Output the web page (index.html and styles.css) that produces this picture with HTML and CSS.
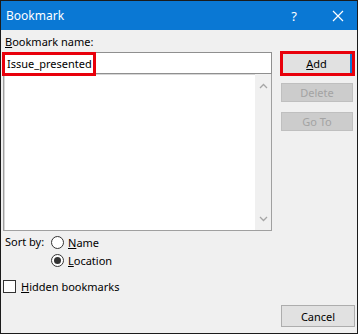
FILE: index.html
```html
<!DOCTYPE html>
<html lang="en">
<head>
  <meta charset="UTF-8" />
  <title>Bookmark</title>
  <link rel="stylesheet" href="styles.css">
</head>
<body>

<div class="window">
  <div class="titlebar">
    <span class="title">Bookmark</span>
    <span class="help">?</span>
    <svg class="close" width="12" height="12" viewBox="0 0 12 12">
      <path d="M1 1 L11 11 M11 1 L1 11" stroke="#fff" stroke-width="1.2" fill="none"/>
    </svg>
  </div>

  <div class="content">
    <div class="left">
      <div class="label"><u>B</u>ookmark name:</div>
      <div class="name-input">
        <span class="typed">Issue_presented</span><span class="caret"></span>
        <div class="mark mark-name"></div>
      </div>
      <div class="listbox">
        <div class="list-items"></div>
        <div class="scrollbar">
          <svg width="9" height="6" viewBox="0 0 9 6"><path d="M1 5 L4.5 1.5 L8 5" stroke="#a6a6a6" stroke-width="1.3" fill="none"/></svg>
          <svg width="9" height="6" viewBox="0 0 9 6"><path d="M1 1 L4.5 4.5 L8 1" stroke="#a6a6a6" stroke-width="1.3" fill="none"/></svg>
        </div>
      </div>

      <div class="sort">
        <span class="sort-label">Sort by:</span>
        <div class="radios">
          <div class="radio-row"><span class="radio"></span><u>N</u>ame</div>
          <div class="radio-row"><span class="radio checked"></span><u>L</u>ocation</div>
        </div>
      </div>

      <div class="check-row"><span class="checkbox"></span><u>H</u>idden bookmarks</div>
    </div>

    <div class="right">
      <div class="mark-add">
        <button class="btn btn-default"><u>A</u>dd</button>
      </div>
      <button class="btn btn-disabled btn-delete">Delete</button>
      <button class="btn btn-disabled btn-goto">Go To</button>
      <button class="btn btn-cancel">Cancel</button>
    </div>
  </div>
</div>

</body>
</html>
```

FILE: styles.css
```css
body {
  margin: 0;
  font-family: "Noto Sans", "Open Sans", sans-serif;
  font-size: 11px;
  color: #000;
  background: #fff;
}

u {
  text-decoration: underline;
  text-underline-offset: 1px;
}

.window {
  width: 358px;
  height: 334px;
  box-sizing: border-box;
  border: 1px solid #1b1b1b;
  background: #f0f0f0;
  display: flex;
  flex-direction: column;
}

.titlebar {
  height: 29px;
  background: #0a78d4;
  color: #fff;
  display: flex;
  align-items: center;
  padding: 0 0 0 5px;
  flex-shrink: 0;
}

.title {
  flex: 1;
  font-size: 12px;
}

.help {
  font-size: 13px;
  margin-right: 35px;
}

.close {
  margin-right: 13px;
}

.content {
  flex: 1;
  display: grid;
  grid-template-columns: 269px 75px;
  column-gap: 8px;
  padding: 0 2px;
}

.left {
  display: flex;
  flex-direction: column;
}

.label {
  padding: 5px 0 0 2px;
  height: 17px;
  line-height: 14px;
}

.name-input {
  position: relative;
  height: 22px;
  box-sizing: border-box;
  border: 1px solid #8f8f8f;
  background: #fff;
  display: flex;
  align-items: center;
  padding-left: 3px;
}

.caret {
  display: inline-block;
  width: 1px;
  height: 14px;
  background: #000;
  margin-left: 1px;
}

.mark {
  position: absolute;
  border: 3px solid #e8000b;
  box-sizing: border-box;
}

.mark-name {
  left: -2px;
  top: -1px;
  width: 94px;
  height: 24px;
}

.listbox {
  margin-top: -1px;
  height: 158px;
  box-sizing: border-box;
  border: 1px solid #a0a0a0;
  box-shadow: inset 1px 1px 0 #d6d6d6;
  background: #fff;
  display: flex;
}

.list-items {
  flex: 1;
}

.scrollbar {
  width: 16px;
  background: #f0f0f0;
  display: flex;
  flex-direction: column;
  justify-content: space-between;
  align-items: center;
  padding: 9px 0 8px;
}

.sort {
  display: flex;
  padding: 2px 0 0 2px;
}

.sort-label {
  width: 46px;
  line-height: 18px;
}

.radio-row {
  display: flex;
  align-items: center;
  height: 18px;
}

.radio {
  width: 13px;
  height: 13px;
  box-sizing: border-box;
  border: 1px solid #333;
  border-radius: 50%;
  background: #fff;
  margin-right: 4px;
  display: flex;
  align-items: center;
  justify-content: center;
}

.radio.checked::after {
  content: "";
  width: 7px;
  height: 7px;
  border-radius: 50%;
  background: #333;
}

.check-row {
  display: flex;
  align-items: center;
  margin-top: 8px;
  height: 18px;
}

.checkbox {
  width: 13px;
  height: 13px;
  box-sizing: border-box;
  border: 1px solid #333;
  background: #fff;
  margin-right: 5px;
}

.right {
  display: flex;
  flex-direction: column;
  padding-bottom: 6px;
}

.btn {
  font-family: inherit;
  font-size: 11px;
  padding: 0;
  margin: 0;
  box-sizing: border-box;
}

.mark-add {
  margin-top: 21px;
  border: 3px solid #e8000b;
  height: 25px;
  box-sizing: border-box;
  display: flex;
}

.btn-default {
  flex: 1;
  background: #e1e1e1;
  border: 1px solid #0a78d4;
  border-width: 0 2px 0 0;
  color: #000;
}

.btn-disabled {
  margin: 7px 0 0 1px;
  width: 72px;
  height: 19px;
  background: #cccccc;
  border: 1px solid #bfbfbf;
  color: #a3a3a3;
}

.btn-goto {
  margin-top: 10px;
}

.btn-cancel {
  margin: auto 0 0 1px;
  width: 74px;
  height: 22px;
  background: #e1e1e1;
  border: 1px solid #adadad;
  color: #000;
}
```
